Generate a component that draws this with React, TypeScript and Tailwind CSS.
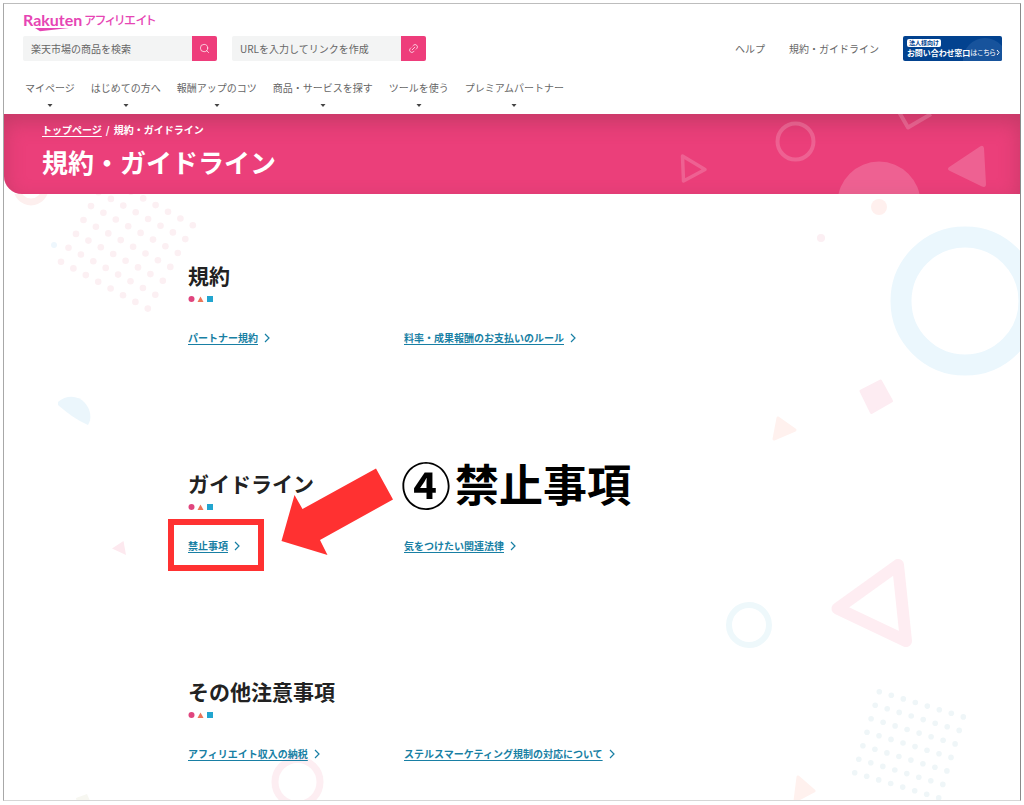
import React from 'react';
import { Search, Link2 } from 'lucide-react';

const navItems = [
  'マイページ',
  'はじめての方へ',
  '報酬アップのコツ',
  '商品・サービスを探す',
  'ツールを使う',
  'プレミアムパートナー',
];

const sections = [
  { title: '規約', links: ['パートナー規約', '料率・成果報酬のお支払いのルール'] },
  { title: 'ガイドライン', links: ['禁止事項', '気をつけたい関連法律'], marked: true },
  { title: 'その他注意事項', links: ['アフィリエイト収入の納税', 'ステルスマーケティング規制の対応について'] },
];

const dotGrid = (x: number, y: number, col: number[], row: number[]) =>
  Array.from({ length: 56 }, (_, i) => {
    const c = i % 8;
    const r = Math.floor(i / 8);
    return { cx: x + c * col[0] + r * row[0], cy: y + c * col[1] + r * row[1] };
  });

const leftDots = dotGrid(61, 261.7, [12.4, 6.7], [7.5, -13.9]);
const rightDots = dotGrid(879.3, 691.7, [12, 3.6], [-4.1, 13.5]);

const Logo = () => (
  <a href="#" className="relative flex h-6 w-fit items-center gap-0.5 text-[#e645b4]">
    <span className="font-[family-name:Lato] text-[16px] leading-6 font-bold">Rakuten</span>
    <span className="text-[12px] leading-6 font-medium [font-feature-settings:'palt']">アフィリエイト</span>
    <svg className="absolute top-5 left-3" width="34" height="4" viewBox="0 0 34 4" aria-hidden="true">
      <path d="M0 0H34L5 3.2Z" fill="currentColor" />
    </svg>
  </a>
);

type SearchBoxProps = { label: string; action: string; children: React.ReactNode };

const SearchBox = ({ label, action, children }: SearchBoxProps) => (
  <form className="flex h-[25px] w-[194px]" onSubmit={(e) => e.preventDefault()}>
    <input
      type="text"
      aria-label={label}
      placeholder={label}
      className="min-w-0 flex-1 rounded-l-xs bg-[#f3f4f4] px-2 text-[10px] leading-6 text-[#555] placeholder:text-[#666]"
    />
    <button
      type="submit"
      aria-label={action}
      className="flex w-[25px] items-center justify-center rounded-r-xs bg-[#ee3d7b] text-white"
    >
      {children}
    </button>
  </form>
);

const ContactBanner = () => (
  <a
    href="#"
    className="relative flex h-[25px] w-[99px] flex-col justify-center overflow-hidden rounded-xs bg-[#02428f] pl-1 text-white"
  >
    <svg className="absolute inset-0" width="99" height="25" viewBox="0 0 99 25" aria-hidden="true">
      <circle cx="82" cy="24" r="22" fill="#17539c" />
    </svg>
    <span className="relative flex h-2 w-[34px] items-center justify-center rounded-[2px] bg-white text-[6px] font-bold text-[#02428f]">
      法人様向け
    </span>
    <span className="relative flex h-3 items-center whitespace-nowrap">
      <b className="text-[8px] [font-feature-settings:'palt']">お問い合わせ窓口</b>
      <span className="text-[7px] [font-feature-settings:'palt']">はこちら</span>
      <svg width="4" height="7" viewBox="0 0 4 7" aria-hidden="true">
        <path d="M1 1L3 3.5L1 6" fill="none" stroke="currentColor" />
      </svg>
    </span>
  </a>
);

const Hero = () => (
  <div className="relative h-20 overflow-hidden rounded-bl-[18px] bg-[#eb3f7a] pt-[7px] pl-[38px] text-white shadow-[inset_0_8px_20px_rgba(150,50,80,0.45)]">
    <svg className="absolute top-0 right-0" width="360" height="80" viewBox="660 114 360 80" aria-hidden="true">
      <g fill="none" stroke="#fff" strokeOpacity="0.18" strokeLinejoin="round">
        <circle cx="795.5" cy="141.5" r="18" strokeWidth="4" />
        <path d="M682.500 156L705 169.500L683.500 181Z" strokeWidth="3.500" />
        <path d="M899 112L908 127.500L931 114" strokeWidth="4" />
      </g>
      <g fill="#fff" fillOpacity="0.18">
        <circle cx="879" cy="203" r="41.500" />
        <path
          d="M950 166.500L980 146.500Q983 144.500 984 148L986 184Q986 188 982 186.500L949 170.500Q946.500 168.500 950 166.500Z"
        />
      </g>
    </svg>
    <nav className="relative flex h-4 items-center gap-1 text-[10px] font-bold">
      <a href="#" className="underline underline-offset-2">
        トップページ
      </a>
      <span>/</span>
      <span>規約・ガイドライン</span>
    </nav>
    <h1 className="relative mt-[5px] text-[26px] leading-10 font-bold">規約・ガイドライン</h1>
  </div>
);

const Shapes = () => (
  <>
    <svg className="absolute top-0 left-0" width="330" height="607" viewBox="4 194 330 607" aria-hidden="true">
      <circle cx="31" cy="188" r="14" fill="none" stroke="#fdefee" strokeWidth="7" />
      <g fill="#fcf0f3">
        {leftDots.map((dot) => (
          <circle key={`${dot.cx}-${dot.cy}`} cx={dot.cx} cy={dot.cy} r="3.300" />
        ))}
      </g>
      <circle cx="54" cy="245" r="3" fill="#eef7fd" />
      <path d="M58 402C66 395 78 395 85 403C91 410 92 419 88 425C77 420 67 413 58 405Z" fill="#ebf6fc" />
      <path d="M112 548.500L123.500 541L126 555Z" fill="#fde9ef" />
      <circle cx="297.500" cy="782" r="22.500" fill="none" stroke="#fdeef2" strokeWidth="7" />
      <path d="M76 798L87 794L91 803H77Z" fill="#f7f7f1" />
    </svg>
    <svg className="absolute top-0 right-0" width="330" height="607" viewBox="690 194 330 607" aria-hidden="true">
      <circle cx="965" cy="301" r="64" fill="none" stroke="#ebf7fd" strokeWidth="21" />
      <circle cx="879" cy="207" r="8" fill="#fff0ee" />
      <circle cx="821" cy="238" r="4" fill="#fceff3" />
      <g fill="#fdecf2" stroke="#fdecf2" strokeWidth="3" strokeLinejoin="round">
        <path d="M861 391L880.500 381L891.500 401L871.500 412.500Z" />
      </g>
      <g fill="#fff1ee" stroke="#fff1ee" strokeWidth="3" strokeLinejoin="round">
        <path d="M778 418L795 430L774 439Z" />
        <path d="M798 777L814 791L795 801Z" />
      </g>
      <path
        d="M898 565L837.500 608.500L906 641Z"
        fill="none"
        stroke="#feedf2"
        strokeWidth="12"
        strokeLinejoin="round"
      />
      <circle cx="749" cy="625" r="20" fill="none" stroke="#eef8fb" strokeWidth="6" />
      <g fill="#eff6f8">
        {rightDots.map((dot) => (
          <circle key={`${dot.cx}-${dot.cy}`} cx={dot.cx} cy={dot.cy} r="2.800" />
        ))}
      </g>
    </svg>
  </>
);

const Annotation = () => (
  <>
    <div className="pointer-events-none absolute top-[50px] -left-5 h-[52px] w-24 border-[6px] border-[#ff3131]" />
    <svg className="absolute -top-[3px] left-[92px]" width="114" height="90" viewBox="280 466 114 90" aria-hidden="true">
      <path d="M281.500 541L294.500 495L302.500 509L376 468.500L393 499.500L320 540L327.500 555Z" fill="#ff3131" />
    </svg>
    <p className="absolute -top-4 left-[213px] flex items-center gap-1 text-[44px] leading-[60px] font-bold whitespace-nowrap text-black">
      <span className="text-[50px]">④</span>
      <span>禁止事項</span>
    </p>
  </>
);

const App = () => {
  return (
    <div
      lang="ja"
      className="min-h-screen bg-white p-[3px] font-['Noto_Sans_CJK_JP','Noto_Sans',sans-serif] text-[#222]"
    >
      <div className="border border-t-[#bdbdbd] border-r-[#8a8a8a] border-b-[#d6d6d6] border-l-[#a8a8a8]">
        <header className="pt-1 pr-[18px] pb-[3px] pl-[19px]">
          <Logo />
          <div className="mt-1 flex items-center">
            <div className="flex gap-[15px]">
              <SearchBox label="楽天市場の商品を検索" action="検索">
                <Search size={11} strokeWidth={1.5} />
              </SearchBox>
              <SearchBox label="URLを入力してリンクを作成" action="リンクを作成">
                <Link2 size={11} strokeWidth={1.5} className="-rotate-45" />
              </SearchBox>
            </div>
            <div className="ml-auto flex items-center gap-6 text-[10px] text-[#666]">
              <a href="#">ヘルプ</a>
              <a href="#">規約・ガイドライン</a>
              <ContactBanner />
            </div>
          </div>
          <nav className="mt-[19px] flex gap-4 pl-0.5">
            {navItems.map((item) => (
              <button key={item} type="button" className="flex flex-col items-center text-[10px] leading-4 text-[#666]">
                {item}
                <svg className="mt-2 mb-1" width="6" height="3" viewBox="0 0 6 3" aria-hidden="true">
                  <path d="M0.500 0H5.500L3 3Z" fill="#444" />
                </svg>
              </button>
            ))}
          </nav>
        </header>
        <Hero />
        <main className="relative overflow-hidden pt-[67px] pb-[38px]">
          <Shapes />
          <div className="relative mx-auto flex max-w-[648px] flex-col gap-[123px]">
            {sections.map(({ title, links, marked }) => (
              <section key={title} className="relative">
                <h2 className="text-[21px] leading-7 font-bold">{title}</h2>
                <svg className="mt-[7px]" width="26" height="6" viewBox="0 0 26 6" aria-hidden="true">
                  <circle cx="3.500" cy="3" r="3" fill="#e0457e" />
                  <path d="M9.500 6L12.500 0.500L15.500 6Z" fill="#ec7458" />
                  <rect x="19" width="6" height="6" fill="#22a5cf" />
                </svg>
                <ul className="mt-7 grid grid-cols-3">
                  {links.map((link) => (
                    <li key={link} className="flex items-center gap-1.5 text-[10px] leading-4 whitespace-nowrap text-[#187fa4]">
                      <a href="#" className="font-bold underline underline-offset-2">
                        {link}
                      </a>
                      <svg width="6" height="10" viewBox="0 0 6 10" fill="none" aria-hidden="true">
                        <path d="M1 1L5 5L1 9" stroke="currentColor" strokeWidth="1.200" />
                      </svg>
                    </li>
                  ))}
                </ul>
                {marked && <Annotation />}
              </section>
            ))}
          </div>
        </main>
      </div>
    </div>
  );
};

export default App;
